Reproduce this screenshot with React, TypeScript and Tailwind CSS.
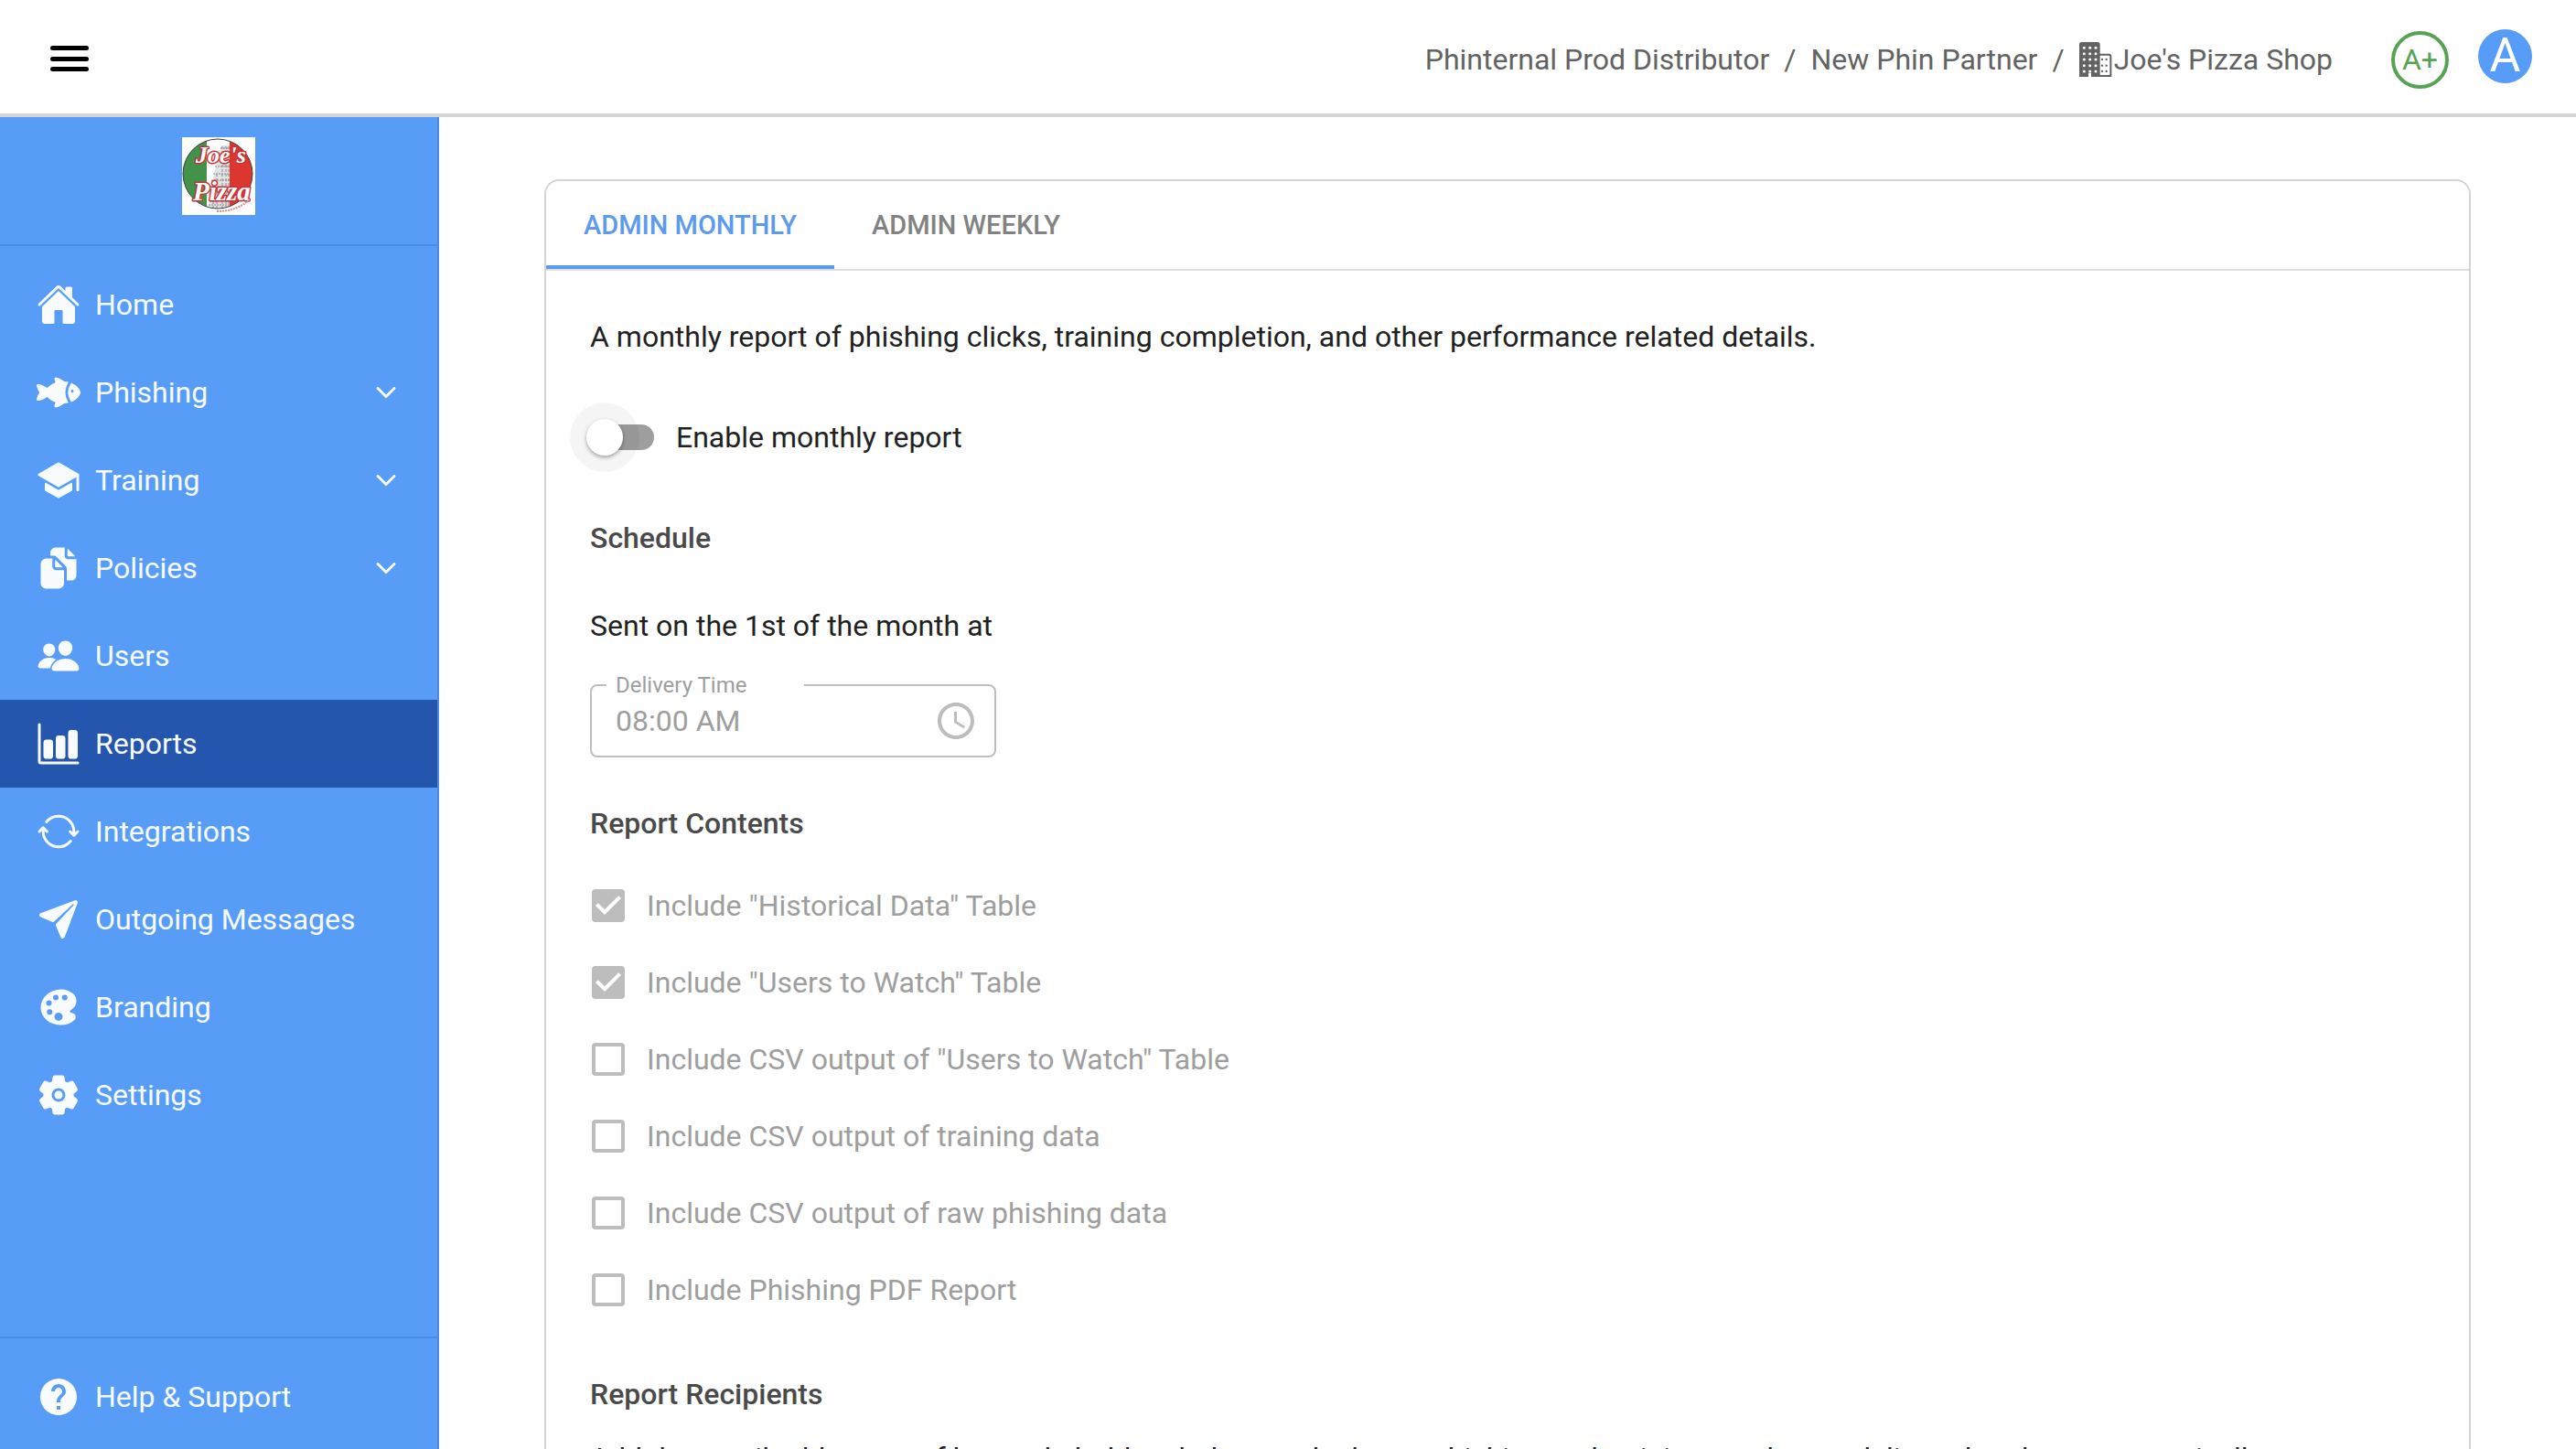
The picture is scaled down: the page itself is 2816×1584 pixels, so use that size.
import { useState } from "react";
import {
  IoBarChart,
  IoChevronDown,
  IoColorPalette,
  IoDocuments,
  IoFish,
  IoHome,
  IoPaperPlane,
  IoPeople,
  IoSchool,
  IoSettings,
  IoSyncOutline,
} from "react-icons/io5";
import { MdAccessTime, MdHelp } from "react-icons/md";

const menu = [
  { title: "Home", icon: IoHome },
  { title: "Phishing", icon: IoFish, expandable: true },
  { title: "Training", icon: IoSchool, expandable: true },
  { title: "Policies", icon: IoDocuments, expandable: true },
  { title: "Users", icon: IoPeople },
  { title: "Reports", icon: IoBarChart, active: true },
  { title: "Integrations", icon: IoSyncOutline },
  { title: "Outgoing Messages", icon: IoPaperPlane },
  { title: "Branding", icon: IoColorPalette },
  { title: "Settings", icon: IoSettings },
];

const contents = [
  { id: "historical", label: 'Include "Historical Data" Table', checked: true },
  { id: "watch", label: 'Include "Users to Watch" Table', checked: true },
  { id: "watch-csv", label: 'Include CSV output of "Users to Watch" Table', checked: false },
  { id: "training-csv", label: "Include CSV output of training data", checked: false },
  { id: "phishing-csv", label: "Include CSV output of raw phishing data", checked: false },
  { id: "phishing-pdf", label: "Include Phishing PDF Report", checked: false },
];

function BuildingIcon() {
  return (
    <svg viewBox="0 0 108 114" className="h-[38px] w-9" aria-hidden="true">
      <path d="M8 0h52a8 8 0 0 1 8 8v106H39v-13h-9v13H0V8a8 8 0 0 1 8-8Z" fill="currentColor" />
      <path d="M66 41h31a6 6 0 0 1 6 6v64H66" fill="none" stroke="currentColor" strokeWidth="6" />
      {[19, 38, 57, 77, 96].map((y) =>
        [16, 35, 54].map((x) => <circle key={`${x}-${y}`} cx={x} cy={y} r="4.5" fill="#fff" />)
      )}
      {[57, 77, 96].map((y) =>
        [75, 89].map((x) => <circle key={`${x}-${y}`} cx={x} cy={y} r="3.5" fill="currentColor" />)
      )}
    </svg>
  );
}

function Logo() {
  return (
    <svg viewBox="0 0 80 85" className="h-[85px] w-20" role="img" aria-label="Joe's Pizza">
      <defs>
        <clipPath id="plate">
          <circle cx="39" cy="40" r="38" />
        </clipPath>
      </defs>
      <rect width="80" height="85" fill="#fff" />
      <g clipPath="url(#plate)">
        <rect width="27" height="85" fill="#43924a" />
        <rect x="52" width="28" height="85" fill="#dc362e" />
        <g fill="none" stroke="#888" strokeWidth="1">
          <path d="M43 9h9v70H29l2-16 3-18 4-18Z" fill="#e2e2e2" stroke="none" />
          <path d="M42 12h10M40 18h12M38 25h14M36 32h16M34 40h18M32 47h20M31 55h21M30 66h22M29 74h23" strokeDasharray="2 1" />
          <path d="M44 10v68M48 10v68M51 10v68M38 40v38M34 50v28" strokeDasharray="3 2" />
        </g>
      </g>
      <circle cx="39" cy="40" r="38" fill="none" stroke="#3d3d3d" />
      <g
        fill="#fff"
        stroke="#c8333a"
        strokeWidth="3"
        strokeLinejoin="round"
        paintOrder="stroke"
        className="font-['Liberation_Serif',serif] font-bold italic"
      >
        <text x="15" y="28" fontSize="26">Joe's</text>
        <text x="12" y="69" fontSize="29">Pizza</text>
      </g>
      <path d="M38 81q22 0 36-13" fill="none" stroke="#d98a8a" strokeWidth="2" strokeDasharray="2 1" />
    </svg>
  );
}

function Header() {
  return (
    <header className="flex h-32 shrink-0 items-center justify-between border-b-4 border-[#d6d6d6] bg-white pt-1 pr-12 pl-[55px]">
      <button type="button" aria-label="Toggle menu" className="flex h-7 w-[42px] flex-col justify-between">
        <span className="h-[5px] w-full rounded-full bg-black" />
        <span className="h-[5px] w-full rounded-full bg-black" />
        <span className="h-[5px] w-full rounded-full bg-black" />
      </button>
      <div className="flex items-center pt-[2px]">
        <nav aria-label="Breadcrumb" className="flex items-center gap-4 text-[#636363]">
          <a href="#">Phinternal Prod Distributor</a>
          <span>/</span>
          <a href="#">New Phin Partner</a>
          <span>/</span>
          <a href="#" className="flex items-center gap-[2px]">
            <BuildingIcon />
            Joe's Pizza Shop
          </a>
        </nav>
        <span className="ml-16 flex size-[63px] items-center justify-center rounded-full border-4 border-[#56a354] text-[#56a354]">
          A+
        </span>
        <button
          type="button"
          className="mb-2 ml-8 flex size-[59px] items-center justify-center rounded-full bg-[#579df8] text-[52px] text-white"
        >
          A
        </button>
      </div>
    </header>
  );
}

function Sidebar() {
  return (
    <aside className="flex w-[480px] shrink-0 flex-col border-r-2 border-[#4d8ade] bg-[#579df8] text-[#f8fcff]">
      <div className="flex justify-center border-b-2 border-[#4a8ce4] pt-[22px] pb-8">
        <Logo />
      </div>
      <nav className="flex flex-col py-4">
        {menu.map((item) => (
          <a
            key={item.title}
            href="#"
            className={`flex h-24 items-center gap-4 px-10 ${item.active ? "bg-[#2556ad]" : ""}`}
          >
            <item.icon className="size-12" />
            <span className="flex-1">{item.title}</span>
            {item.expandable && <IoChevronDown className="size-8" />}
          </a>
        ))}
      </nav>
      <div className="mt-auto border-t-2 border-[#4a8ce4] pt-4 pb-[9px]">
        <a href="#" className="flex h-24 items-center gap-4 px-10">
          <MdHelp className="size-12" />
          <span>Help &amp; Support</span>
        </a>
      </div>
    </aside>
  );
}

function Tab({ title, active, onClick }: { title: string; active: boolean; onClick: () => void }) {
  return (
    <button
      type="button"
      role="tab"
      aria-selected={active}
      onClick={onClick}
      className={`h-24 border-b-4 px-[41px] pt-1 text-[29px] font-medium uppercase ${
        active ? "border-[#5b9aec] text-[#5b9aec]" : "border-transparent text-[#828282]"
      }`}
    >
      {title}
    </button>
  );
}

function Switch() {
  const [enabled, setEnabled] = useState(false);
  return (
    <label className="-ml-[22px] flex h-[76px] items-center">
      <span className="relative flex h-[76px] w-[116px] items-center px-6">
        <span className="h-7 w-full rounded-full bg-[#9e9e9e]" />
        <span
          className={`absolute top-0 flex size-[76px] items-center justify-center rounded-full bg-black/4 ${
            enabled ? "right-0" : "left-0"
          }`}
        >
          <span className="size-10 rounded-full bg-white shadow-[0_2px_4px_rgba(0,0,0,0.35)]" />
        </span>
        <input
          type="checkbox"
          role="switch"
          checked={enabled}
          onChange={() => setEnabled(!enabled)}
          className="absolute inset-0 appearance-none"
        />
      </span>
      Enable monthly report
    </label>
  );
}

function CheckRow({ id, label, checked }: { id: string; label: string; checked: boolean }) {
  return (
    <div className="flex h-[84px] items-center gap-6 pl-[2px] text-[#9e9e9e]">
      <span className="relative flex size-9">
        <input
          id={id}
          type="checkbox"
          defaultChecked={checked}
          disabled
          className="size-9 appearance-none rounded border-4 border-[#bdbdbd] checked:bg-[#bdbdbd]"
        />
        {checked && (
          <svg viewBox="3 3 18 18" className="absolute inset-0 size-9" fill="#fff" aria-hidden="true">
            <path d="M10 17l-5-5 1.41-1.41L10 14.17l7.59-7.59L19 8z" />
          </svg>
        )}
      </span>
      <label htmlFor={id}>{label}</label>
    </div>
  );
}

export default function App() {
  const [tab, setTab] = useState("monthly");

  return (
    <div className="flex h-screen flex-col bg-white font-[Roboto,sans-serif] text-[32px] leading-[48px] text-[#212121]">
      <Header />
      <div className="flex min-h-0 flex-1">
        <Sidebar />
        <main className="flex-1 overflow-hidden px-[115px] pt-[68px]">
          <section className="rounded-2xl border-2 border-[#d4d4d4]">
            <div role="tablist" className="flex border-b-2 border-[#dedede]">
              <Tab title="Admin Monthly" active={tab === "monthly"} onClick={() => setTab("monthly")} />
              <Tab title="Admin Weekly" active={tab === "weekly"} onClick={() => setTab("weekly")} />
            </div>
            <div className="flex flex-col items-start p-12">
              <p className="mb-12">
                A monthly report of phishing clicks, training completion, and other performance related details.
              </p>
              <Switch />
              <h2 className="my-12 font-medium text-[#4a4a4a]">Schedule</h2>
              <p>Sent on the 1st of the month at</p>
              <fieldset className="mt-7 w-[444px] min-w-0 rounded-lg border-2 border-[#bdbdbd] pb-3 text-[#9e9e9e]">
                <legend className="ml-4 w-[216px] px-[10px] text-2xl leading-[26px]">
                  <label htmlFor="delivery-time">Delivery Time</label>
                </legend>
                <div className="flex h-[52px] items-center pr-[18px] pl-[26px]">
                  <input
                    id="delivery-time"
                    type="text"
                    defaultValue="08:00 AM"
                    disabled
                    className="w-0 flex-1 bg-transparent"
                  />
                  <MdAccessTime className="size-12 text-[#bdbdbd]" />
                </div>
              </fieldset>
              <h2 className="mt-12 mb-6 font-medium text-[#4a4a4a]">Report Contents</h2>
              {contents.map((item) => (
                <CheckRow key={item.id} {...item} />
              ))}
              <h2 className="mt-12 mb-[22px] font-medium text-[#4a4a4a]">Report Recipients</h2>
              <p>
                Add the email addresses of key stakeholders below so the latest phishing and training results are
                delivered to them automatically.
              </p>
            </div>
          </section>
        </main>
      </div>
    </div>
  );
}
